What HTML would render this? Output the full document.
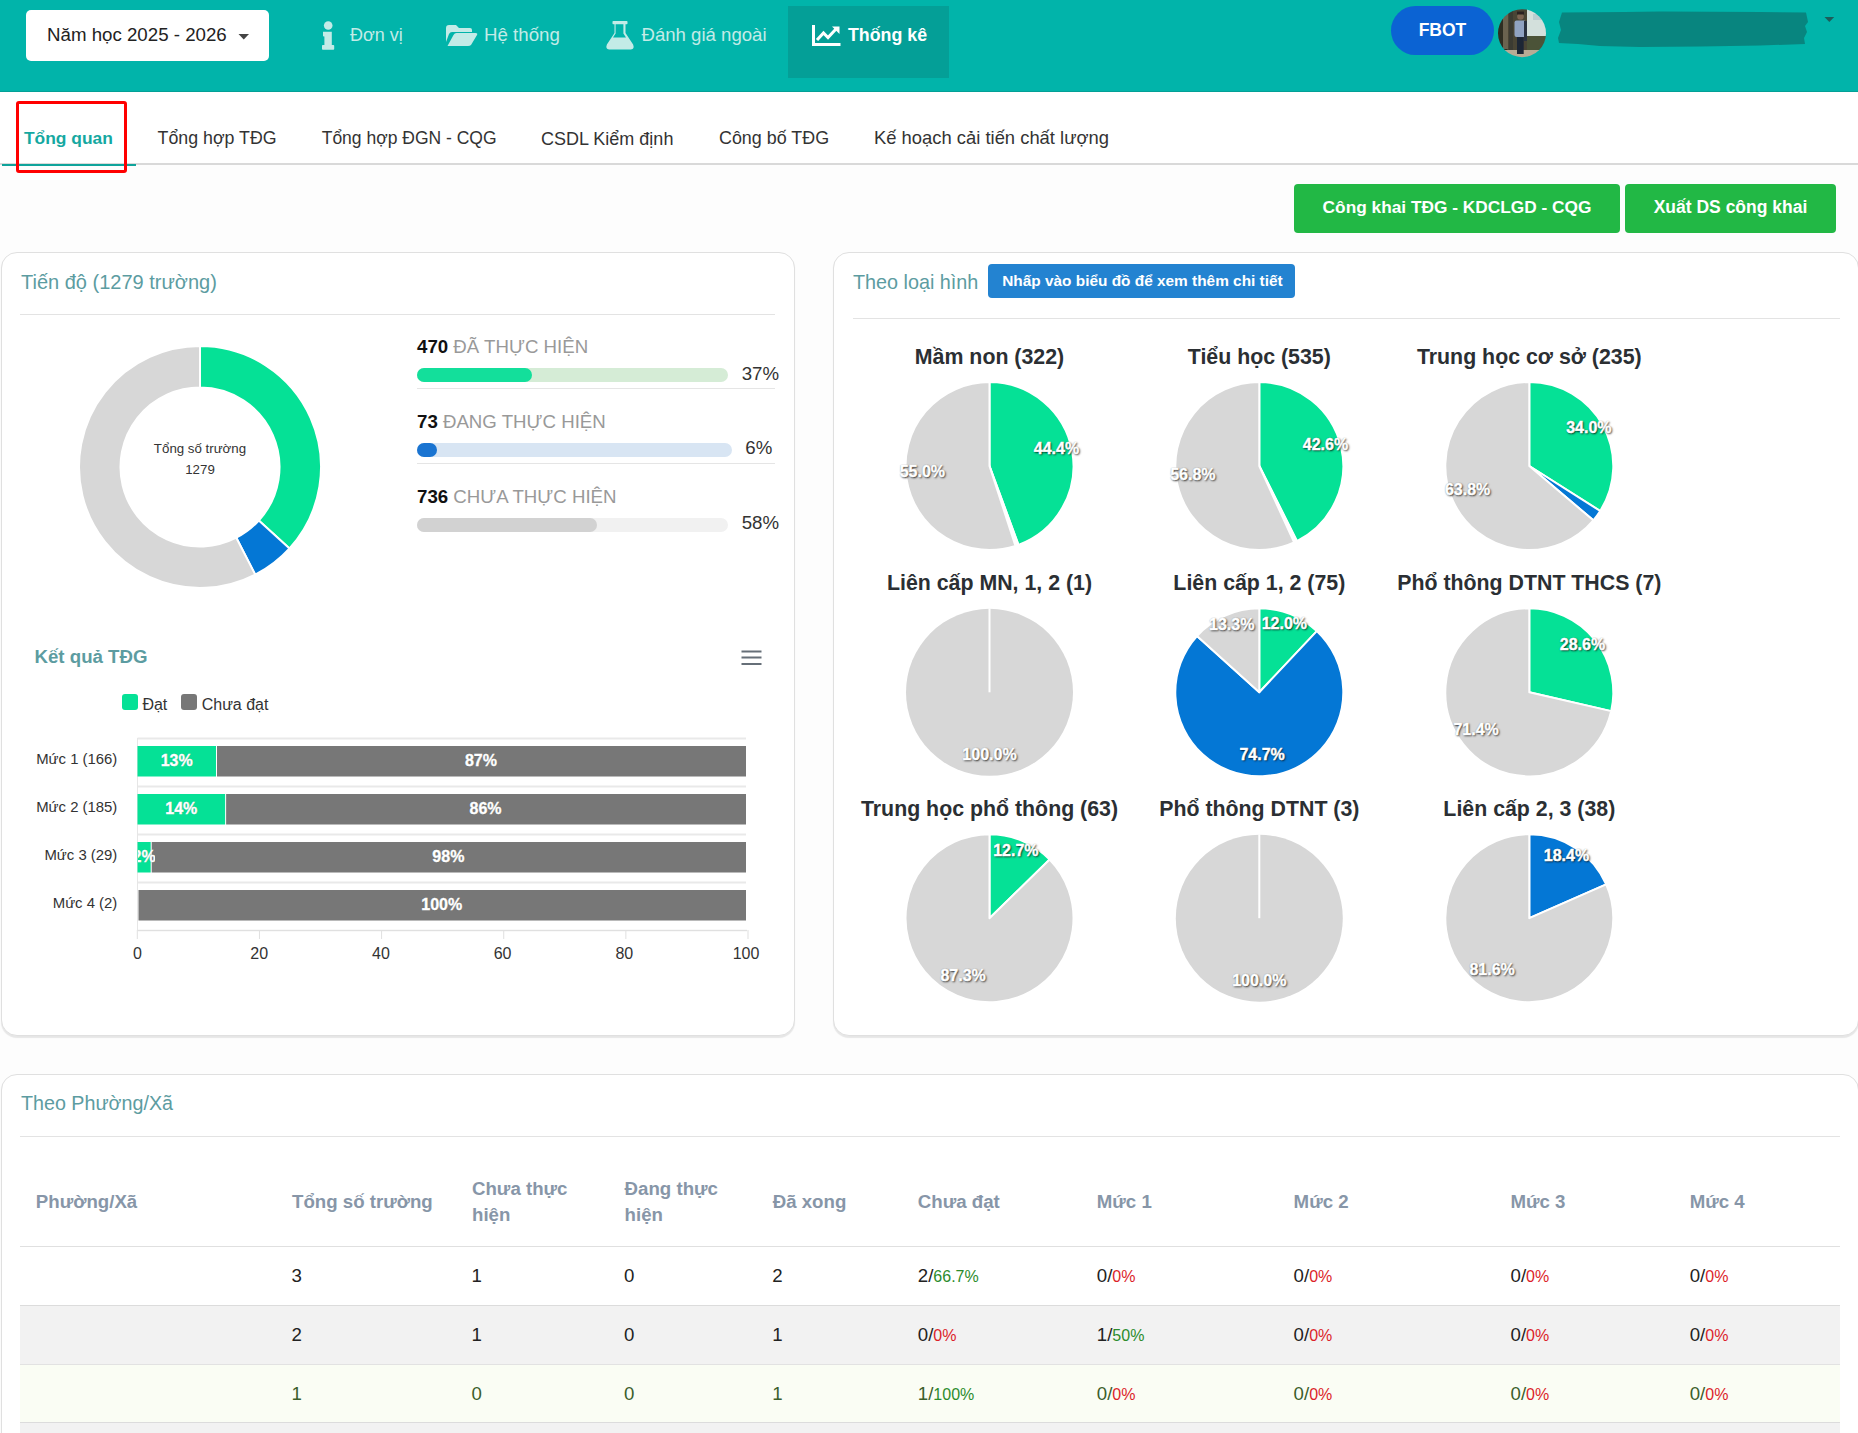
<!DOCTYPE html><html><head><meta charset="utf-8"><style>
*{margin:0;padding:0;box-sizing:border-box}
html,body{width:1858px;height:1433px;overflow:hidden;background:#fdfdfd;font-family:"Liberation Sans",sans-serif}
.t{position:absolute;line-height:1;white-space:nowrap}
.r{position:absolute}
svg{position:absolute;left:0;top:0}
.card{position:absolute;background:#fff;border:1px solid #e0e0e0;border-radius:16px;box-shadow:0 1.5px 1px rgba(0,0,0,.09)}
.pl{font-weight:bold;color:#fff;text-shadow:1px 1px 2px rgba(0,0,0,.75),0 0 1px rgba(0,0,0,.6)}
</style></head><body><div class="r" style="left:0px;top:0px;width:1858px;height:92px;background:#01b4aa;"></div>
<div class="r" style="left:0px;top:90.6px;width:1858px;height:1.4px;background:#03a096;"></div>
<div class="r" style="left:26px;top:10px;width:243px;height:51px;background:#fff;border-radius:5px;"></div>
<div class="t" style="left:47px;top:25.67px;font-size:18.7px;color:#222;font-weight:normal;">Năm học 2025 - 2026</div>
<svg width="1858" height="100" style="left:0;top:0"><path d="M238.5,34 L249,34 L243.75,39.5Z" fill="#444"/></svg>
<svg width="1858" height="92" style="left:0;top:0">
<circle cx="328.2" cy="25.5" r="4.3" fill="#c3ebe7"/>
<path d="M323,31.8 h8.8 v13.1 h1.6 q0.8,0 0.8,0.8 v3.2 q0,0.8 -0.8,0.8 h-10.6 q-0.8,0 -0.8,-0.8 v-3.2 q0,-0.8 0.8,-0.8 h1.6 v-8.4 h-0.6 q-0.8,0 -0.8,-0.8 v-3.9z" fill="#c3ebe7"/>
<path d="M446,28 q0,-3 3,-3 h7 l3,3 h11 q2,0 2,2 v2 h-20 q-2,0 -3,2 l-3,8z" fill="#c3ebe7"/>
<path d="M447.5,46 l6,-11 q1,-2 3,-2 h19 q2.5,0 1.5,2 l-6,10 q-1,1 -3,1z" fill="#c3ebe7"/>
<path d="M612.3,21 h14.4 q0.8,0 0.8,0.8 v1.6 q0,0.8 -0.8,0.8 h-1.2 v8.8 l7.6,11.6 q1.8,4.4 -2.2,4.9 h-21.8 q-4,-0.5 -2.2,-4.9 l7.6,-11.6 v-8.8 h-1.2 q-0.8,0 -0.8,-0.8 v-1.6 q0,-0.8 0.8,-0.8z" fill="#c3ebe7"/><path d="M615.6,24.2 h7.8 v9.2 l2.6,4 h-13 l2.6,-4z" fill="#01b4aa"/>
</svg>
<div class="t" style="left:350px;top:26.46px;font-size:18px;color:#c3ebe7;font-weight:normal;">Đơn vị</div>
<div class="t" style="left:484px;top:25.87px;font-size:18.7px;color:#c3ebe7;font-weight:normal;">Hệ thống</div>
<div class="t" style="left:641.5px;top:25.96px;font-size:18.6px;color:#c3ebe7;font-weight:normal;">Đánh giá ngoài</div>
<div class="r" style="left:788px;top:6px;width:161px;height:71.5px;background:#049f97;"></div>
<svg width="1858" height="92" style="left:0;top:0">
<path d="M813.5,25 v19.5 h27" stroke="#fff" stroke-width="3" fill="none"/>
<path d="M817,40 l6.5,-7 l4.5,4.5 l8,-8.5" stroke="#fff" stroke-width="3" fill="none"/>
<path d="M832,26.5 h7.5 v7.5z" fill="#fff"/>
</svg>
<div class="t" style="left:848px;top:26.63px;font-size:17.8px;color:#fff;font-weight:bold;">Thống kê</div>
<div class="r" style="left:1391px;top:6px;width:103px;height:49px;background:#0b63d3;border-radius:25px;"></div>
<div class="t" style="left:1442.5px;top:21.99px;font-size:17.5px;color:#fff;font-weight:bold;transform:translateX(-50%);">FBOT</div>
<svg width="1858" height="92" style="left:0;top:0">
<defs><clipPath id="av"><circle cx="1522" cy="33.2" r="24"/></clipPath>
<filter id="bl" x="-10%" y="-10%" width="120%" height="120%"><feGaussianBlur stdDeviation="0.7"/></filter></defs>
<g clip-path="url(#av)"><g filter="url(#bl)">
<rect x="1497" y="9" width="50" height="50" fill="#4a4536"/>
<rect x="1497" y="9" width="10" height="50" fill="#2f2d24"/>
<rect x="1503" y="9" width="5" height="40" fill="#6a6450"/>
<rect x="1509" y="9" width="4" height="45" fill="#3a3a30"/>
<rect x="1527" y="9" width="21" height="27" fill="#d3e0dc"/>
<rect x="1533" y="14" width="10" height="6" fill="#b9cdd0"/>
<rect x="1527" y="36" width="21" height="16" fill="#4c5238"/>
<rect x="1497" y="50" width="50" height="9" fill="#b8ab95"/>
<rect x="1514.5" y="20.5" width="11.5" height="16.5" rx="2" fill="#90a3c2"/>
<rect x="1524" y="21" width="3" height="20" fill="#2b3040"/>
<circle cx="1520.5" cy="16.5" r="3.3" fill="#7b6552"/>
<rect x="1517" y="11.5" width="7" height="3" fill="#2a2420"/>
<rect x="1517" y="37" width="6.7" height="17" fill="#1f2636"/>
</g></g></svg>
<svg width="1858" height="92" style="left:0;top:0">
<path d="M1562,12.5 L1625,12 L1660,11.5 L1760,12 L1806,12.5 L1808,22 L1805,26 L1807,32 L1804,38 L1805,44 L1760,45.5 L1700,46.5 L1640,47 L1600,46 L1578,44 L1559,43 L1558,38 L1561,30 L1559,22 Z" fill="#08857f"/>
<path d="M1824.5,17 h9.7 l-4.85,5z" fill="#1d5d5a"/>
</svg>
<div class="r" style="left:0px;top:92px;width:1858px;height:71px;background:#fff;"></div>
<div class="r" style="left:0px;top:163px;width:1858px;height:2px;background:#d9d9d9;"></div>
<div class="r" style="left:2px;top:164px;width:134px;height:2.2px;background:#0fa39b;"></div>
<div class="t" style="left:24px;top:130.27px;font-size:17.4px;color:#15a8a1;font-weight:bold;">Tổng quan</div>
<div class="t" style="left:157.6px;top:129.93px;font-size:17.8px;color:#333;font-weight:normal;">Tổng hợp TĐG</div>
<div class="t" style="left:321.7px;top:130.19px;font-size:17.5px;color:#333;font-weight:normal;">Tổng hợp ĐGN - CQG</div>
<div class="t" style="left:541px;top:129.76px;font-size:18px;color:#333;font-weight:normal;">CSDL Kiểm định</div>
<div class="t" style="left:719px;top:129.85px;font-size:17.9px;color:#333;font-weight:normal;">Công bố TĐG</div>
<div class="t" style="left:874px;top:129.42px;font-size:18.4px;color:#333;font-weight:normal;">Kế hoạch cải tiến chất lượng</div>
<div class="r" style="left:15.8px;top:101px;width:111px;height:72px;background:transparent;border:3.8px solid #f00;border-radius:3px;"></div>
<div class="r" style="left:1294px;top:184px;width:326px;height:48.5px;background:#22b845;border-radius:4px;"></div>
<div class="t" style="left:1457px;top:198.86px;font-size:17.3px;color:#fff;font-weight:bold;transform:translateX(-50%);">Công khai TĐG - KDCLGD - CQG</div>
<div class="r" style="left:1625px;top:184px;width:211px;height:48.5px;background:#22b845;border-radius:4px;"></div>
<div class="t" style="left:1730.5px;top:198.69px;font-size:17.5px;color:#fff;font-weight:bold;transform:translateX(-50%);">Xuất DS công khai</div>
<div class="card" style="left:0.5px;top:252px;width:794.5px;height:784px"></div>
<div class="t" style="left:21px;top:271.67px;font-size:20px;color:#5c9ca1;font-weight:normal;">Tiến độ (1279 trường)</div>
<div class="r" style="left:20px;top:313.5px;width:755px;height:1px;background:#e3e3e3;"></div>
<svg width="400" height="700" style="left:0;top:0"><path d="M200.00,346.00 A121,121 0 0,1 289.51,548.42 L258.81,520.50 A79.5,79.5 0 0,0 200.00,387.50 Z" fill="#05e196" stroke="#fff" stroke-width="2" stroke-linejoin="round"/><path d="M289.51,548.42 A121,121 0 0,1 255.24,574.66 L236.29,537.73 A79.5,79.5 0 0,0 258.81,520.50 Z" fill="#0477d5" stroke="#fff" stroke-width="2" stroke-linejoin="round"/><path d="M255.24,574.66 A121,121 0 1,1 200.00,346.00 L200.00,387.50 A79.5,79.5 0 1,0 236.29,537.73 Z" fill="#d7d7d7" stroke="#fff" stroke-width="2" stroke-linejoin="round"/></svg>
<div class="t" style="left:200px;top:442.14px;font-size:13.3px;color:#333;font-weight:normal;transform:translateX(-50%);">Tổng số trường</div>
<div class="t" style="left:200px;top:463.44px;font-size:13.3px;color:#333;font-weight:normal;transform:translateX(-50%);">1279</div>
<div class="t" style="left:417px;top:337.50px;font-size:18.67px;color:#999"><b style="color:#111">470</b> ĐÃ THỰC HIỆN</div>
<div class="r" style="left:417px;top:368px;width:311px;height:14px;background:#d5ecd6;border-radius:7px;"></div>
<div class="r" style="left:417px;top:368px;width:115px;height:14px;background:#13df9b;border-radius:7px;"></div>
<div class="t" style="left:741.7px;top:364.80px;font-size:18.67px;color:#333;font-weight:normal;">37%</div>
<div class="r" style="left:417px;top:388px;width:358px;height:1px;background:#e5e5e5;"></div>
<div class="t" style="left:417px;top:412.70px;font-size:18.67px;color:#999"><b style="color:#111">73</b> ĐANG THỰC HIỆN</div>
<div class="r" style="left:417px;top:443px;width:315px;height:14px;background:#d8e5f3;border-radius:7px;"></div>
<div class="r" style="left:417px;top:443px;width:19.5px;height:14px;background:#1a74d1;border-radius:7px;"></div>
<div class="t" style="left:745.3px;top:439.20px;font-size:18.67px;color:#333;font-weight:normal;">6%</div>
<div class="r" style="left:417px;top:463px;width:358px;height:1px;background:#e5e5e5;"></div>
<div class="t" style="left:417px;top:487.60px;font-size:18.67px;color:#999"><b style="color:#111">736</b> CHƯA THỰC HIỆN</div>
<div class="r" style="left:417px;top:518px;width:311px;height:14px;background:#f1f1f1;border-radius:7px;"></div>
<div class="r" style="left:417px;top:518px;width:180px;height:14px;background:#d2d2d2;border-radius:7px;"></div>
<div class="t" style="left:741.7px;top:514.20px;font-size:18.67px;color:#333;font-weight:normal;">58%</div>
<div class="t" style="left:34.5px;top:648.20px;font-size:18.67px;color:#5c9ca1;font-weight:bold;">Kết quả TĐG</div>
<svg width="800" height="1000" style="left:0;top:0">
<path d="M741.5,651.5 h20 M741.5,657.5 h20 M741.5,664 h20" stroke="#666f78" stroke-width="2"/>
</svg>
<div class="r" style="left:122px;top:694.3px;width:16px;height:16px;background:#05e196;border-radius:3px;"></div>
<div class="t" style="left:142.4px;top:696.66px;font-size:16px;color:#333;font-weight:normal;">Đạt</div>
<div class="r" style="left:181px;top:694.3px;width:16px;height:16px;background:#777;border-radius:3px;"></div>
<div class="t" style="left:201.7px;top:696.66px;font-size:16px;color:#333;font-weight:normal;">Chưa đạt</div>
<svg width="800" height="1000" style="left:0;top:0"><rect x="137.5" y="737.5" width="608.5" height="2" fill="#e9e9e9"/><rect x="137.5" y="785.5" width="608.5" height="2" fill="#e9e9e9"/><rect x="137.5" y="833.5" width="608.5" height="2" fill="#e9e9e9"/><rect x="137.5" y="881.5" width="608.5" height="2" fill="#e9e9e9"/><rect x="137.5" y="929.8" width="609.5" height="1.4" fill="#e0e0e0"/><rect x="137" y="738" width="1" height="192" fill="#e6e6e6"/><rect x="136.80" y="930" width="1" height="9" fill="#e0e0e0"/><rect x="258.94" y="930" width="1" height="9" fill="#e0e0e0"/><rect x="381.08" y="930" width="1" height="9" fill="#e0e0e0"/><rect x="503.22" y="930" width="1" height="9" fill="#e0e0e0"/><rect x="625.36" y="930" width="1" height="9" fill="#e0e0e0"/><rect x="747.50" y="930" width="1" height="9" fill="#e0e0e0"/><rect x="137.5" y="746" width="78.50" height="30.5" fill="#05e196"/><rect x="217.00" y="746" width="529.00" height="30.5" fill="#777777"/><rect x="137.5" y="794" width="87.62" height="30.5" fill="#05e196"/><rect x="226.12" y="794" width="519.88" height="30.5" fill="#777777"/><rect x="137.5" y="842" width="13.20" height="30.5" fill="#05e196"/><rect x="151.70" y="842" width="594.30" height="30.5" fill="#777777"/><rect x="137.5" y="890" width="0.00" height="30.5" fill="#05e196"/><rect x="138.50" y="890" width="607.50" height="30.5" fill="#777777"/></svg>
<div class="t" style="left:176.74824999999998px;top:753.46px;font-size:16px;color:#fff;font-weight:bold;transform:translateX(-50%);-webkit-text-stroke:0.4px #fff;text-shadow:0 0 1px rgba(0,0,0,.45);">13%</div>
<div class="t" style="left:480.99825px;top:753.46px;font-size:16px;color:#fff;font-weight:bold;transform:translateX(-50%);-webkit-text-stroke:0.4px #fff;text-shadow:0 0 1px rgba(0,0,0,.45);">87%</div>
<div class="t" style="left:181.312px;top:801.46px;font-size:16px;color:#fff;font-weight:bold;transform:translateX(-50%);-webkit-text-stroke:0.4px #fff;text-shadow:0 0 1px rgba(0,0,0,.45);">14%</div>
<div class="t" style="left:485.562px;top:801.46px;font-size:16px;color:#fff;font-weight:bold;transform:translateX(-50%);-webkit-text-stroke:0.4px #fff;text-shadow:0 0 1px rgba(0,0,0,.45);">86%</div>
<div class="r" style="left:137.5px;top:839px;width:17.5px;height:36px;overflow:hidden">
<div class="t" style="left:6.602225000000004px;top:10.46px;font-size:16px;color:#fff;font-weight:bold;transform:translateX(-50%);-webkit-text-stroke:0.4px #fff;text-shadow:0 0 1px rgba(0,0,0,.45);">2%</div>
</div>
<div class="t" style="left:448.352225px;top:849.46px;font-size:16px;color:#fff;font-weight:bold;transform:translateX(-50%);-webkit-text-stroke:0.4px #fff;text-shadow:0 0 1px rgba(0,0,0,.45);">98%</div>
<div class="t" style="left:441.75px;top:897.46px;font-size:16px;color:#fff;font-weight:bold;transform:translateX(-50%);-webkit-text-stroke:0.4px #fff;text-shadow:0 0 1px rgba(0,0,0,.45);">100%</div>
<div class="t" style="right:1740.7px;top:751.69px;font-size:14.9px;color:#333;font-weight:normal;">Mức 1 (166)</div>
<div class="t" style="right:1740.7px;top:799.69px;font-size:14.9px;color:#333;font-weight:normal;">Mức 2 (185)</div>
<div class="t" style="right:1740.7px;top:847.69px;font-size:14.9px;color:#333;font-weight:normal;">Mức 3 (29)</div>
<div class="t" style="right:1740.7px;top:895.69px;font-size:14.9px;color:#333;font-weight:normal;">Mức 4 (2)</div>
<div class="t" style="left:137.5px;top:946.46px;font-size:16px;color:#333;font-weight:normal;transform:translateX(-50%);">0</div>
<div class="t" style="left:259.2px;top:946.46px;font-size:16px;color:#333;font-weight:normal;transform:translateX(-50%);">20</div>
<div class="t" style="left:380.9px;top:946.46px;font-size:16px;color:#333;font-weight:normal;transform:translateX(-50%);">40</div>
<div class="t" style="left:502.6px;top:946.46px;font-size:16px;color:#333;font-weight:normal;transform:translateX(-50%);">60</div>
<div class="t" style="left:624.3px;top:946.46px;font-size:16px;color:#333;font-weight:normal;transform:translateX(-50%);">80</div>
<div class="t" style="left:746.0px;top:946.46px;font-size:16px;color:#333;font-weight:normal;transform:translateX(-50%);">100</div>
<div class="card" style="left:833px;top:252px;width:1026px;height:784px"></div>
<div class="t" style="left:853px;top:272.64px;font-size:19.8px;color:#5c9ca1;font-weight:normal;">Theo loại hình</div>
<div class="r" style="left:988px;top:264px;width:307px;height:34px;background:#2383d1;border-radius:4px;"></div>
<div class="t" style="left:1002.2px;top:273.16px;font-size:15.4px;color:#fff;font-weight:bold;">Nhấp vào biểu đồ để xem thêm chi tiết</div>
<div class="r" style="left:853px;top:318px;width:987px;height:1px;background:#e3e3e3;"></div>
<div class="t" style="left:989.5px;top:346.94px;font-size:21.33px;color:#2b2f33;font-weight:bold;transform:translateX(-50%);">Mầm non (322)</div>
<div class="t" style="left:1259.3px;top:346.94px;font-size:21.33px;color:#2b2f33;font-weight:bold;transform:translateX(-50%);">Tiểu học (535)</div>
<div class="t" style="left:1529.3px;top:346.94px;font-size:21.33px;color:#2b2f33;font-weight:bold;transform:translateX(-50%);">Trung học cơ sở (235)</div>
<div class="t" style="left:989.5px;top:573.24px;font-size:21.33px;color:#2b2f33;font-weight:bold;transform:translateX(-50%);">Liên cấp MN, 1, 2 (1)</div>
<div class="t" style="left:1259.3px;top:573.24px;font-size:21.33px;color:#2b2f33;font-weight:bold;transform:translateX(-50%);">Liên cấp 1, 2 (75)</div>
<div class="t" style="left:1529.3px;top:573.24px;font-size:21.33px;color:#2b2f33;font-weight:bold;transform:translateX(-50%);">Phổ thông DTNT THCS (7)</div>
<div class="t" style="left:989.5px;top:799.14px;font-size:21.33px;color:#2b2f33;font-weight:bold;transform:translateX(-50%);">Trung học phổ thông (63)</div>
<div class="t" style="left:1259.3px;top:799.14px;font-size:21.33px;color:#2b2f33;font-weight:bold;transform:translateX(-50%);">Phổ thông DTNT (3)</div>
<div class="t" style="left:1529.3px;top:799.14px;font-size:21.33px;color:#2b2f33;font-weight:bold;transform:translateX(-50%);">Liên cấp 2, 3 (38)</div>
<svg width="1858" height="1100" style="left:0;top:0"><path d="M989.50,466.00 L989.50,382.00 A84,84 0 0,1 1018.45,544.85 Z" fill="#05e196" stroke="#fff" stroke-width="2" stroke-linejoin="round"/><path d="M989.50,466.00 L1018.45,544.85 A84,84 0 0,1 1015.46,545.89 Z" fill="#fff" stroke="#fff" stroke-width="2" stroke-linejoin="round"/><path d="M989.50,466.00 L1015.46,545.89 A84,84 0 1,1 989.50,382.00 Z" fill="#d7d7d7" stroke="#fff" stroke-width="2" stroke-linejoin="round"/><path d="M1259.30,466.00 L1259.30,382.00 A84,84 0 0,1 1296.96,541.08 Z" fill="#05e196" stroke="#fff" stroke-width="2" stroke-linejoin="round"/><path d="M1259.30,466.00 L1296.96,541.08 A84,84 0 0,1 1294.11,542.45 Z" fill="#fff" stroke="#fff" stroke-width="2" stroke-linejoin="round"/><path d="M1259.30,466.00 L1294.11,542.45 A84,84 0 1,1 1259.30,382.00 Z" fill="#d7d7d7" stroke="#fff" stroke-width="2" stroke-linejoin="round"/><path d="M1529.30,466.00 L1529.30,382.00 A84,84 0 0,1 1600.22,511.01 Z" fill="#05e196" stroke="#fff" stroke-width="2" stroke-linejoin="round"/><path d="M1529.30,466.00 L1600.22,511.01 A84,84 0 0,1 1593.35,520.35 Z" fill="#0477d5" stroke="#fff" stroke-width="2" stroke-linejoin="round"/><path d="M1529.30,466.00 L1593.35,520.35 A84,84 0 1,1 1529.30,382.00 Z" fill="#d7d7d7" stroke="#fff" stroke-width="2" stroke-linejoin="round"/><circle cx="989.5" cy="692.3" r="83.5" fill="#d7d7d7"/><path d="M989.5,692.3 V608.3" stroke="#fff" stroke-width="2"/><path d="M1259.30,692.30 L1259.30,608.30 A84,84 0 0,1 1316.80,631.07 Z" fill="#05e196" stroke="#fff" stroke-width="2" stroke-linejoin="round"/><path d="M1259.30,692.30 L1316.80,631.07 A84,84 0 1,1 1196.99,635.96 Z" fill="#0477d5" stroke="#fff" stroke-width="2" stroke-linejoin="round"/><path d="M1259.30,692.30 L1196.99,635.96 A84,84 0 0,1 1259.30,608.30 Z" fill="#d7d7d7" stroke="#fff" stroke-width="2" stroke-linejoin="round"/><path d="M1529.30,692.30 L1529.30,608.30 A84,84 0 0,1 1611.16,711.14 Z" fill="#05e196" stroke="#fff" stroke-width="2" stroke-linejoin="round"/><path d="M1529.30,692.30 L1611.16,711.14 A84,84 0 1,1 1529.30,608.30 Z" fill="#d7d7d7" stroke="#fff" stroke-width="2" stroke-linejoin="round"/><path d="M989.50,918.20 L989.50,834.20 A84,84 0 0,1 1049.64,859.55 Z" fill="#05e196" stroke="#fff" stroke-width="2" stroke-linejoin="round"/><path d="M989.50,918.20 L1049.64,859.55 A84,84 0 1,1 989.50,834.20 Z" fill="#d7d7d7" stroke="#fff" stroke-width="2" stroke-linejoin="round"/><circle cx="1259.3" cy="918.2" r="83.5" fill="#d7d7d7"/><path d="M1259.3,918.2 V834.2" stroke="#fff" stroke-width="2"/><path d="M1529.30,918.20 L1529.30,834.20 A84,84 0 0,1 1606.18,884.36 Z" fill="#0477d5" stroke="#fff" stroke-width="2" stroke-linejoin="round"/><path d="M1529.30,918.20 L1606.18,884.36 A84,84 0 1,1 1529.30,834.20 Z" fill="#d7d7d7" stroke="#fff" stroke-width="2" stroke-linejoin="round"/></svg>
<div class="t" style="left:1056.45px;top:441.16px;font-size:16px;color:#fff;font-weight:bold;transform:translateX(-50%);-webkit-text-stroke:0.45px #fff;text-shadow:1px 1px 2px rgba(0,0,0,.8),0 0 1px rgba(0,0,0,.5);">44.4%</div>
<div class="t" style="left:922.34px;top:463.70px;font-size:16px;color:#fff;font-weight:bold;transform:translateX(-50%);-webkit-text-stroke:0.45px #fff;text-shadow:1px 1px 2px rgba(0,0,0,.8),0 0 1px rgba(0,0,0,.5);">55.0%</div>
<div class="t" style="left:1325.47px;top:437.39px;font-size:16px;color:#fff;font-weight:bold;transform:translateX(-50%);-webkit-text-stroke:0.45px #fff;text-shadow:1px 1px 2px rgba(0,0,0,.8),0 0 1px rgba(0,0,0,.5);">42.6%</div>
<div class="t" style="left:1192.85px;top:467.48px;font-size:16px;color:#fff;font-weight:bold;transform:translateX(-50%);-webkit-text-stroke:0.45px #fff;text-shadow:1px 1px 2px rgba(0,0,0,.8),0 0 1px rgba(0,0,0,.5);">56.8%</div>
<div class="t" style="left:1588.89px;top:420.30px;font-size:16px;color:#fff;font-weight:bold;transform:translateX(-50%);-webkit-text-stroke:0.45px #fff;text-shadow:1px 1px 2px rgba(0,0,0,.8),0 0 1px rgba(0,0,0,.5);">34.0%</div>
<div class="t" style="left:1467.59px;top:481.63px;font-size:16px;color:#fff;font-weight:bold;transform:translateX(-50%);-webkit-text-stroke:0.45px #fff;text-shadow:1px 1px 2px rgba(0,0,0,.8),0 0 1px rgba(0,0,0,.5);">63.8%</div>
<div class="t" style="left:989.5px;top:747.36px;font-size:16px;color:#fff;font-weight:bold;transform:translateX(-50%);-webkit-text-stroke:0.45px #fff;text-shadow:1px 1px 2px rgba(0,0,0,.8),0 0 1px rgba(0,0,0,.5);">100.0%</div>
<div class="t" style="left:1284.33px;top:616.14px;font-size:16px;color:#fff;font-weight:bold;transform:translateX(-50%);-webkit-text-stroke:0.45px #fff;text-shadow:1px 1px 2px rgba(0,0,0,.8),0 0 1px rgba(0,0,0,.5);">12.0%</div>
<div class="t" style="left:1262.08px;top:747.30px;font-size:16px;color:#fff;font-weight:bold;transform:translateX(-50%);-webkit-text-stroke:0.45px #fff;text-shadow:1px 1px 2px rgba(0,0,0,.8),0 0 1px rgba(0,0,0,.5);">74.7%</div>
<div class="t" style="left:1231.71px;top:617.21px;font-size:16px;color:#fff;font-weight:bold;transform:translateX(-50%);-webkit-text-stroke:0.45px #fff;text-shadow:1px 1px 2px rgba(0,0,0,.8),0 0 1px rgba(0,0,0,.5);">13.3%</div>
<div class="t" style="left:1582.5px;top:637.01px;font-size:16px;color:#fff;font-weight:bold;transform:translateX(-50%);-webkit-text-stroke:0.45px #fff;text-shadow:1px 1px 2px rgba(0,0,0,.8),0 0 1px rgba(0,0,0,.5);">28.6%</div>
<div class="t" style="left:1476.1px;top:721.71px;font-size:16px;color:#fff;font-weight:bold;transform:translateX(-50%);-webkit-text-stroke:0.45px #fff;text-shadow:1px 1px 2px rgba(0,0,0,.8),0 0 1px rgba(0,0,0,.5);">71.4%</div>
<div class="t" style="left:1015.92px;top:842.60px;font-size:16px;color:#fff;font-weight:bold;transform:translateX(-50%);-webkit-text-stroke:0.45px #fff;text-shadow:1px 1px 2px rgba(0,0,0,.8),0 0 1px rgba(0,0,0,.5);">12.7%</div>
<div class="t" style="left:963.08px;top:967.92px;font-size:16px;color:#fff;font-weight:bold;transform:translateX(-50%);-webkit-text-stroke:0.45px #fff;text-shadow:1px 1px 2px rgba(0,0,0,.8),0 0 1px rgba(0,0,0,.5);">87.3%</div>
<div class="t" style="left:1259.3px;top:973.26px;font-size:16px;color:#fff;font-weight:bold;transform:translateX(-50%);-webkit-text-stroke:0.45px #fff;text-shadow:1px 1px 2px rgba(0,0,0,.8),0 0 1px rgba(0,0,0,.5);">100.0%</div>
<div class="t" style="left:1566.45px;top:848.31px;font-size:16px;color:#fff;font-weight:bold;transform:translateX(-50%);-webkit-text-stroke:0.45px #fff;text-shadow:1px 1px 2px rgba(0,0,0,.8),0 0 1px rgba(0,0,0,.5);">18.4%</div>
<div class="t" style="left:1492.15px;top:962.21px;font-size:16px;color:#fff;font-weight:bold;transform:translateX(-50%);-webkit-text-stroke:0.45px #fff;text-shadow:1px 1px 2px rgba(0,0,0,.8),0 0 1px rgba(0,0,0,.5);">81.6%</div>
<div class="card" style="left:0.5px;top:1074px;width:1858px;height:500px"></div>
<div class="t" style="left:21px;top:1093.92px;font-size:19.7px;color:#5c9ca1;font-weight:normal;">Theo Phường/Xã</div>
<div class="r" style="left:20px;top:1136px;width:1820px;height:1px;background:#e3e3e3;"></div>
<div class="t" style="left:35.8px;top:1192.70px;font-size:18.67px;color:#8796a8;font-weight:bold;">Phường/Xã</div>
<div class="t" style="left:292px;top:1192.70px;font-size:18.67px;color:#8796a8;font-weight:bold;">Tổng số trường</div>
<div class="t" style="left:772.7px;top:1192.70px;font-size:18.67px;color:#8796a8;font-weight:bold;">Đã xong</div>
<div class="t" style="left:917.8px;top:1192.70px;font-size:18.67px;color:#8796a8;font-weight:bold;">Chưa đạt</div>
<div class="t" style="left:1096.8px;top:1192.70px;font-size:18.67px;color:#8796a8;font-weight:bold;">Mức 1</div>
<div class="t" style="left:1293.6px;top:1192.70px;font-size:18.67px;color:#8796a8;font-weight:bold;">Mức 2</div>
<div class="t" style="left:1510.5px;top:1192.70px;font-size:18.67px;color:#8796a8;font-weight:bold;">Mức 3</div>
<div class="t" style="left:1689.7px;top:1192.70px;font-size:18.67px;color:#8796a8;font-weight:bold;">Mức 4</div>
<div class="t" style="left:472px;top:1179.70px;font-size:18.67px;color:#8796a8;font-weight:bold;">Chưa thực</div>
<div class="t" style="left:472px;top:1206.20px;font-size:18.67px;color:#8796a8;font-weight:bold;">hiện</div>
<div class="t" style="left:624.6px;top:1179.70px;font-size:18.67px;color:#8796a8;font-weight:bold;">Đang thực</div>
<div class="t" style="left:624.6px;top:1206.20px;font-size:18.67px;color:#8796a8;font-weight:bold;">hiện</div>
<div class="r" style="left:20px;top:1246px;width:1820px;height:1.2px;background:#e0e0e0;"></div>
<div class="r" style="left:20px;top:1305.5px;width:1820px;height:59px;background:#f2f2f2;"></div>
<div class="r" style="left:20px;top:1305px;width:1820px;height:1px;background:#dcdcdc;"></div>
<div class="r" style="left:20px;top:1364.5px;width:1820px;height:58px;background:#fafdf4;"></div>
<div class="r" style="left:20px;top:1364px;width:1820px;height:1px;background:#e2e2e2;"></div>
<div class="r" style="left:20px;top:1422px;width:1820px;height:20px;background:#f2f2f2;"></div>
<div class="r" style="left:20px;top:1422px;width:1820px;height:1px;background:#dcdcdc;"></div>
<div class="t" style="left:291.5px;top:1266.70px;font-size:18.67px;color:#222;font-weight:normal;">3</div>
<div class="t" style="left:471.5px;top:1266.70px;font-size:18.67px;color:#222;font-weight:normal;">1</div>
<div class="t" style="left:624.1px;top:1266.70px;font-size:18.67px;color:#222;font-weight:normal;">0</div>
<div class="t" style="left:772.2px;top:1266.70px;font-size:18.67px;color:#222;font-weight:normal;">2</div>
<div class="t" style="left:917.8px;top:1266.70px;font-size:18.67px;color:#222">2/<span style="font-size:16px;color:#2c8c2c">66.7%</span></div>
<div class="t" style="left:1096.8px;top:1266.70px;font-size:18.67px;color:#222">0/<span style="font-size:16px;color:#dc1f2a">0%</span></div>
<div class="t" style="left:1293.6px;top:1266.70px;font-size:18.67px;color:#222">0/<span style="font-size:16px;color:#dc1f2a">0%</span></div>
<div class="t" style="left:1510.5px;top:1266.70px;font-size:18.67px;color:#222">0/<span style="font-size:16px;color:#dc1f2a">0%</span></div>
<div class="t" style="left:1689.7px;top:1266.70px;font-size:18.67px;color:#222">0/<span style="font-size:16px;color:#dc1f2a">0%</span></div>
<div class="t" style="left:291.5px;top:1325.90px;font-size:18.67px;color:#222;font-weight:normal;">2</div>
<div class="t" style="left:471.5px;top:1325.90px;font-size:18.67px;color:#222;font-weight:normal;">1</div>
<div class="t" style="left:624.1px;top:1325.90px;font-size:18.67px;color:#222;font-weight:normal;">0</div>
<div class="t" style="left:772.2px;top:1325.90px;font-size:18.67px;color:#222;font-weight:normal;">1</div>
<div class="t" style="left:917.8px;top:1325.90px;font-size:18.67px;color:#222">0/<span style="font-size:16px;color:#dc1f2a">0%</span></div>
<div class="t" style="left:1096.8px;top:1325.90px;font-size:18.67px;color:#222">1/<span style="font-size:16px;color:#2c8c2c">50%</span></div>
<div class="t" style="left:1293.6px;top:1325.90px;font-size:18.67px;color:#222">0/<span style="font-size:16px;color:#dc1f2a">0%</span></div>
<div class="t" style="left:1510.5px;top:1325.90px;font-size:18.67px;color:#222">0/<span style="font-size:16px;color:#dc1f2a">0%</span></div>
<div class="t" style="left:1689.7px;top:1325.90px;font-size:18.67px;color:#222">0/<span style="font-size:16px;color:#dc1f2a">0%</span></div>
<div class="t" style="left:291.5px;top:1385.10px;font-size:18.67px;color:#3b5e2b;font-weight:normal;">1</div>
<div class="t" style="left:471.5px;top:1385.10px;font-size:18.67px;color:#3b5e2b;font-weight:normal;">0</div>
<div class="t" style="left:624.1px;top:1385.10px;font-size:18.67px;color:#3b5e2b;font-weight:normal;">0</div>
<div class="t" style="left:772.2px;top:1385.10px;font-size:18.67px;color:#3b5e2b;font-weight:normal;">1</div>
<div class="t" style="left:917.8px;top:1385.10px;font-size:18.67px;color:#3b5e2b">1/<span style="font-size:16px;color:#2c8c2c">100%</span></div>
<div class="t" style="left:1096.8px;top:1385.10px;font-size:18.67px;color:#3b5e2b">0/<span style="font-size:16px;color:#dc1f2a">0%</span></div>
<div class="t" style="left:1293.6px;top:1385.10px;font-size:18.67px;color:#3b5e2b">0/<span style="font-size:16px;color:#dc1f2a">0%</span></div>
<div class="t" style="left:1510.5px;top:1385.10px;font-size:18.67px;color:#3b5e2b">0/<span style="font-size:16px;color:#dc1f2a">0%</span></div>
<div class="t" style="left:1689.7px;top:1385.10px;font-size:18.67px;color:#3b5e2b">0/<span style="font-size:16px;color:#dc1f2a">0%</span></div></body></html>
